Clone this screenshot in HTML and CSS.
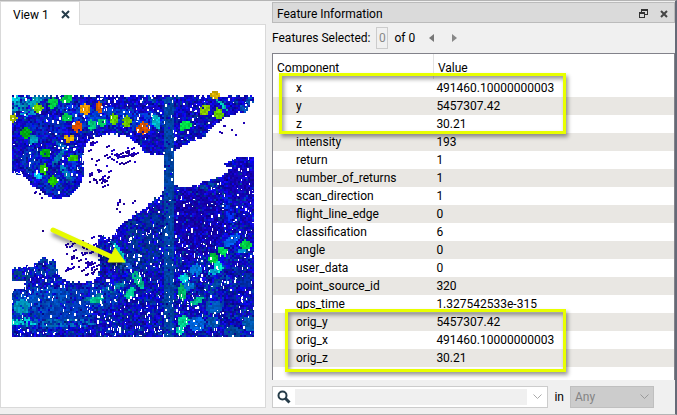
FILE: index.html
```
<!DOCTYPE html>
<html lang="en">

<head>
    <meta charset="UTF-8">
    <meta name="viewport" content="width=device-width, initial-scale=1.0">
    <title>Feature Information</title>
    <link rel="stylesheet" href="styles.css">
</head>

<body>
    <main class="workspace">
        <section class="view">
            <div class="tabs">
                <div class="tab">
                    <span>View 1</span>
                    <button type="button" class="icon-button" aria-label="Close view">
                        <svg width="9" height="9" viewBox="0 0 9 9"><path d="M1 1L8 8M8 1L1 8" stroke="#263c49" stroke-width="2"/></svg>
                    </button>
                </div>
            </div>
            <div class="view-body">
                <canvas id="cloud" class="cloud" width="246" height="252"></canvas>
                <svg class="arrow" width="86" height="48" viewBox="0 0 86 48">
                    <path d="M5 5L64 32" stroke="#e6fa00" stroke-width="5" stroke-linecap="round"/>
                    <path d="M67 23L77 37L60 37Z" fill="#e6fa00" stroke="#e6fa00"/>
                </svg>
            </div>
        </section>

        <section class="panel">
            <header class="panel-title">
                <h1>Feature Information</h1>
                <button type="button" class="icon-button" aria-label="Float panel">
                    <svg width="9" height="9" viewBox="0 0 9 9" fill="none" stroke="#333" shape-rendering="crispEdges"><path d="M2.5 3V.5H8.5V5.5H6M2 1.5H9M.5 3.5H5.5V8.5H.5ZM0 4.5H6"/></svg>
                </button>
                <button type="button" class="icon-button" aria-label="Close panel">
                    <svg width="8" height="8" viewBox="0 0 8 8"><path d="M1 1L7 7M7 1L1 7" stroke="#444" stroke-width="2"/></svg>
                </button>
            </header>

            <div class="selection">
                <label for="current">Features Selected:</label>
                <input type="text" id="current" class="current" value="0" disabled>
                <span class="total">of 0</span>
                <button type="button" class="icon-button" aria-label="Previous feature">
                    <svg width="5" height="8" viewBox="0 0 5 8"><path d="M5 0V8L0 4Z" fill="#777"/></svg>
                </button>
                <button type="button" class="icon-button next" aria-label="Next feature">
                    <svg width="5" height="8" viewBox="0 0 5 8"><path d="M0 0V8L5 4Z" fill="#888"/></svg>
                </button>
            </div>

            <div class="components">
                <table>
                    <thead>
                        <tr><th class="name">Component</th><th>Value</th></tr>
                    </thead>
                    <tbody>
                        <tr><td>x</td><td>491460.10000000003</td></tr>
                        <tr><td>y</td><td>5457307.42</td></tr>
                        <tr><td>z</td><td>30.21</td></tr>
                        <tr><td>intensity</td><td>193</td></tr>
                        <tr><td>return</td><td>1</td></tr>
                        <tr><td>number_of_returns</td><td>1</td></tr>
                        <tr><td>scan_direction</td><td>1</td></tr>
                        <tr><td>flight_line_edge</td><td>0</td></tr>
                        <tr><td>classification</td><td>6</td></tr>
                        <tr><td>angle</td><td>0</td></tr>
                        <tr><td>user_data</td><td>0</td></tr>
                        <tr><td>point_source_id</td><td>320</td></tr>
                        <tr><td>gps_time</td><td>1.327542533e-315</td></tr>
                        <tr><td>orig_y</td><td>5457307.42</td></tr>
                        <tr><td>orig_x</td><td>491460.10000000003</td></tr>
                        <tr><td>orig_z</td><td>30.21</td></tr>
                    </tbody>
                </table>
                <div class="highlight highlight-xyz"></div>
                <div class="highlight highlight-orig"></div>
            </div>

            <form class="search">
                <div class="search-box">
                    <svg width="14" height="14" viewBox="0 0 14 14" fill="none" stroke="#263c49"><circle cx="5.5" cy="5.5" r="4" stroke-width="2"/><path d="M8.5 8.5L12.5 12.5" stroke-width="3"/></svg>
                    <input type="text" aria-label="Search components">
                    <button type="button" class="icon-button" aria-label="Search history">
                        <svg width="9" height="6" viewBox="0 0 9 6"><path d="M.5 .5L4.5 4.5L8.5 .5" fill="none" stroke="#aaa"/></svg>
                    </button>
                </div>
                <label for="scope">in</label>
                <select id="scope" class="scope" disabled>
                    <option>Any</option>
                </select>
            </form>
        </section>
    </main>

    <script src="cloud.js"></script>
</body>

</html>
```
FILE: styles.css
```
* {
    box-sizing: border-box;
}

body {
    margin: 0;
    font-family: Roboto, "Open Sans", sans-serif;
    font-size: 12px;
    line-height: 18px;
    color: #000;
    background: #f0f0f0;
}

input,
select,
button {
    font: inherit;
}

.workspace {
    display: grid;
    grid-template-columns: 33fr 50fr;
    gap: 6px;
    min-height: 100vh;
    padding-bottom: 6px;
    border-top: 1px solid #b4b4b4;
    border-right: 2px solid #656a77;
    border-bottom: 1px solid #b4b4b4;
}

.icon-button {
    display: flex;
    align-items: center;
    justify-content: center;
    padding: 0;
    border: 0;
    background: none;
}

/* map view */
.view {
    display: flex;
    flex-direction: column;
}

.tabs {
    display: flex;
    z-index: 1;
    margin-bottom: -1px;
}

.tab {
    display: flex;
    align-items: center;
    gap: 12px;
    height: 24px;
    padding: 2px 9px 0 12px;
    border: 1px solid #d9d9d9;
    border-bottom: 0;
    background: #fff;
}

.view-body {
    position: relative;
    flex: 1;
    padding: 64px 0 0 9px;
    border: 1px solid #d9d9d9;
    background: #fff;
}

.cloud {
    display: block;
}

.arrow {
    position: absolute;
    top: 200px;
    left: 47px;
    fill: none;
    filter: drop-shadow(1px 4px 2px rgba(0, 0, 0, 0.45));
}

/* feature information panel */
.panel {
    display: flex;
    flex-direction: column;
    padding-top: 1px;
}

.panel-title {
    display: flex;
    align-items: center;
    gap: 12px;
    height: 21px;
    padding: 2px 6px 0 4px;
    border: 1px solid #bbb;
    background: #dadada;
}

.panel-title h1 {
    flex: 1;
    margin: 0;
    font-size: 12px;
    font-weight: 400;
}

.selection {
    display: flex;
    align-items: center;
    height: 30px;
}

.current {
    width: 12px;
    height: 22px;
    margin: 0 6px;
    padding: 0;
    border: 1px solid #ccc;
    background: #f0f0f0;
    color: #888;
    text-align: center;
}

.total {
    margin-right: 14px;
}

.next {
    margin-left: 18px;
}

.components {
    position: relative;
    flex: 1;
    border: 1px solid #82828a;
    border-bottom: 0;
    background: #fff;
}

.components table {
    width: 100%;
    border-collapse: collapse;
    table-layout: fixed;
}

.components th {
    height: 25px;
    padding: 2px 4px 0;
    font-weight: 400;
    text-align: left;
}

.components .name {
    width: 40%;
    border-right: 1px solid #e3e3e3;
}

.components td {
    height: 18px;
    padding: 1px 3px 0;
    line-height: 17px;
}

.components td:first-child {
    padding-left: 23px;
}

.components tbody tr:nth-child(even) {
    background: #e9e7e3;
}

.highlight {
    position: absolute;
    border: 3px solid #e8ff00;
    box-shadow: 2px 3px 4px rgba(0, 0, 0, 0.4), inset 2px 3px 4px rgba(0, 0, 0, 0.4);
}

.highlight-xyz {
    top: 19px;
    left: 6px;
    width: 287px;
    height: 61px;
}

.highlight-orig {
    top: 255px;
    left: 12px;
    width: 281px;
    height: 63px;
}

.search {
    display: flex;
    align-items: center;
    gap: 6px;
    margin-top: 6px;
    padding-right: 21px;
}

.search-box {
    display: flex;
    flex: 1;
    align-items: center;
    gap: 4px;
    height: 22px;
    padding: 0 4px;
    border: 1px solid #ccc;
    background: #fff;
}

.search-box input {
    flex: 1;
    min-width: 0;
    height: 16px;
    padding: 0;
    border: 0;
    background: #f0f0f0;
}

.search-box .icon-button {
    width: 12px;
}

.scope {
    width: 84px;
    height: 22px;
    padding: 0 4px;
    border: 1px solid #bfbfbf;
    border-radius: 0;
    appearance: none;
    background: #ccc url("data:image/svg+xml,%3Csvg xmlns='http://www.w3.org/2000/svg' width='9' height='6'%3E%3Cpath d='M.5 .5L4.5 4.5L8.5 .5' fill='none' stroke='%23999'/%3E%3C/svg%3E") no-repeat right 4px center;
    color: #838383;
    opacity: 1;
}
```
FILE: cloud.js
```
const canvas = document.getElementById('cloud');
const ctx = canvas.getContext('2d');

// canvas origin in map coordinates
const originX = 10;
const originY = 88;

let seed = 12;
function random() {
    seed = (seed + 0x6D2B79F5) | 0;
    let t = Math.imul(seed ^ (seed >>> 15), 1 | seed);
    t = (t + Math.imul(t ^ (t >>> 7), 61 | t)) ^ t;
    return ((t ^ (t >>> 14)) >>> 0) / 4294967296;
}

function shape(points) {
    const path = new Path2D();
    points.forEach(([x, y]) => path.lineTo(x, y));
    path.closePath();
    return path;
}

const north = shape([
    [12, 95], [254, 95], [254, 102], [248, 105], [247, 112], [238, 111], [225, 117], [215, 125],
    [202, 137], [188, 142], [175, 150], [162, 154], [145, 152], [142, 145], [132, 138], [125, 135],
    [110, 133], [93, 137], [85, 145], [83, 152], [84, 172], [78, 188], [67, 196], [55, 198],
    [46, 194], [33, 185], [20, 173], [12, 173]
]);

const south = shape([
    [254, 156], [240, 155], [222, 164], [233, 167], [223, 175], [205, 180], [188, 187], [173, 185],
    [162, 192], [145, 207], [122, 223], [110, 238], [100, 233], [97, 245], [100, 268], [95, 280],
    [84, 282], [67, 281], [58, 273], [55, 260], [43, 256], [32, 265], [12, 267], [12, 280],
    [25, 280], [25, 287], [12, 290], [12, 336], [254, 336]
]);

// x, y, radius x, radius y, angle, colour
const patches = [
    // lower ground
    [45, 306, 48, 22, 0, [0, 60, 190]], [85, 300, 40, 15, -20, [0, 60, 190]],
    [45, 266, 12, 8, 0, [0, 70, 170]], [20, 274, 11, 6, 0, [0, 70, 140]],
    [40, 298, 28, 12, -10, [0, 85, 200]], [20, 305, 8, 7, 0, [0, 150, 190]],
    [145, 240, 16, 30, 20, [0, 50, 160]], [130, 230, 6, 12, 0, [0, 60, 150]],
    [195, 222, 25, 35, 0, [20, 0, 170]], [240, 180, 18, 15, 0, [20, 0, 180]],
    [206, 185, 13, 3, -10, [0, 70, 160]], [228, 208, 4, 13, -12, [0, 50, 240]],
    [218, 282, 15, 6, -25, [0, 75, 170]], [213, 305, 8, 6, 0, [0, 90, 190]],
    [212, 320, 7, 6, 0, [0, 85, 180]], [232, 330, 8, 6, 0, [0, 75, 160]],
    [248, 322, 6, 7, 0, [0, 90, 180]], [245, 278, 7, 7, 0, [0, 45, 170]],
    [196, 322, 8, 7, 0, [0, 100, 220]], [231, 238, 9, 4, -35, [0, 95, 240]],
    [60, 321, 45, 4, 0, [0, 110, 190]], [24, 320, 12, 4, 0, [0, 205, 215]],
    [14, 320, 4, 4, 0, [0, 215, 200]], [106, 289, 25, 3, -25, [0, 130, 170]],
    [95, 298, 7, 3, -20, [0, 200, 150]], [116, 255, 4, 15, -20, [0, 90, 170]],
    [119, 252, 3, 11, -28, [0, 200, 200]], [125, 264, 6, 3, 0, [20, 90, 220]],
    [137, 278, 4, 10, -28, [0, 185, 140]], [129, 292, 4, 7, 30, [0, 205, 150]],
    [183, 276, 5, 4, 0, [0, 225, 230]], [181, 290, 4, 8, 0, [0, 185, 105]],
    [188, 284, 5, 4, 30, [0, 120, 220]], [195, 268, 6, 6, 0, [0, 115, 215]],
    [212, 256, 5, 5, 0, [0, 200, 60]], [222, 249, 5, 5, 0, [0, 225, 90]],
    [217, 265, 5, 5, 0, [0, 235, 200]], [212, 270, 5, 3, -20, [0, 165, 210]],
    [245, 243, 5, 5, 20, [0, 215, 70]], [241, 249, 4, 2, 0, [0, 150, 220]],
    [196, 299, 8, 3, -30, [0, 190, 145]], [183, 319, 6, 5, 0, [0, 215, 145]],
    [179, 328, 4, 4, 0, [0, 200, 170]],
    // upper ground
    [30, 98, 22, 10, -20, [0, 95, 185]], [45, 126, 22, 12, -15, [0, 45, 200]],
    [80, 112, 22, 11, 25, [0, 65, 215]], [125, 116, 40, 9, 5, [0, 65, 220]],
    [32, 158, 12, 13, 0, [0, 55, 190]], [50, 182, 12, 10, 0, [0, 60, 200]],
    [73, 163, 7, 16, 10, [0, 60, 220]], [150, 97, 20, 2, 30, [0, 75, 170]],
    [20, 102, 10, 6, -30, [0, 150, 190]], [34, 100, 7, 4, -30, [0, 165, 185]],
    [28, 112, 10, 4, -20, [0, 145, 200]], [15, 97, 4, 3, 0, [0, 200, 220]],
    [37, 106, 5, 4, 0, [110, 205, 0]], [12, 116, 4, 4, 0, [170, 195, 0]],
    [52, 101, 5, 5, 0, [0, 205, 65]], [66, 97, 6, 4, -20, [0, 215, 75]],
    [25, 131, 5, 5, 0, [0, 175, 20]], [32, 138, 4, 5, 0, [0, 165, 195]],
    [44, 151, 5, 4, 0, [0, 185, 20]], [43, 167, 4, 5, 0, [45, 205, 0]],
    [37, 174, 4, 3, 0, [0, 200, 240]], [52, 179, 5, 5, 0, [30, 205, 0]],
    [72, 156, 5, 4, 0, [50, 205, 0]], [58, 155, 3, 9, 38, [0, 120, 180]],
    [64, 170, 3, 9, -35, [0, 130, 190]], [61, 144, 8, 2, 35, [0, 110, 200]],
    [68, 136, 5, 4, 0, [225, 175, 0]], [77, 125, 5, 5, 20, [235, 85, 0]],
    [84, 107, 5, 5, 0, [245, 155, 0]], [98, 105, 4, 5, 0, [215, 95, 0]],
    [66, 115, 5, 4, 0, [0, 205, 80]], [91, 123, 4, 5, 0, [0, 210, 130]],
    [101, 120, 4, 4, 0, [0, 210, 100]], [113, 117, 4, 6, 0, [105, 215, 0]],
    [126, 120, 4, 6, 0, [110, 200, 0]], [142, 126, 6, 6, 0, [215, 85, 0]],
    [155, 119, 4, 7, -15, [0, 190, 210]], [184, 124, 6, 4, -25, [0, 235, 75]],
    [204, 108, 6, 5, -30, [140, 205, 0]], [218, 112, 4, 6, -30, [105, 215, 0]],
    [220, 101, 2, 11, -40, [0, 200, 185]], [214, 93, 5, 4, 0, [220, 180, 0]],
    [243, 106, 4, 4, 0, [0, 80, 190]], [249, 99, 3, 4, 0, [0, 90, 190]]
];

function dot(x, y, colour) {
    ctx.fillStyle = `rgb(${colour.map(Math.round).join()})`;
    ctx.fillRect(x - originX, y - originY, 2, 2);
}

function patchAt(x, y) {
    for (let i = patches.length - 1; i >= 0; i--) {
        const [px, py, rx, ry, angle, colour] = patches[i];
        const a = angle * Math.PI / 180;
        const u = ((x - px) * Math.cos(a) + (y - py) * Math.sin(a)) / rx;
        const v = ((y - py) * Math.cos(a) - (x - px) * Math.sin(a)) / ry;
        // large patches fade into the ground, small ones stay solid
        const solid = rx < 10 && ry < 12;
        if (u * u + v * v < 0.8 + random() * 0.5 && random() < (solid ? 0.97 : 0.55)) {
            return colour;
        }
    }
    return null;
}

for (let y = 88; y < 336; y += 2) {
    for (let x = 10; x < 254; x += 2) {
        const jx = x + random() * 2;
        const jy = y + random() * 2;
        const inNorth = ctx.isPointInPath(north, jx, jy);
        const inSouth = ctx.isPointInPath(south, jx, jy);
        const onRoad = x >= 164 && x <= 172 && y >= 95;
        let colour = patchAt(x, y);
        const treeTop = y < 95 && colour && colour[0] + colour[1] > 190;
        const treeLeft = x < 12 && colour && colour[0] > 100;
        if (!inNorth && !inSouth && !onRoad && !treeTop && !treeLeft) {
            continue;
        }
        if (onRoad && random() < 0.9) {
            colour = [0, 70, 168];
        }
        if (!colour) {
            const dull = y > 240 ? 0.35 : 0.18;
            colour = random() < dull
                ? [0, 25 + random() * 50, 140 + random() * 50]
                : [random() * 28, random() * 14, 150 + random() * 100];
        }
        const light = 0.82 + random() * 0.3;
        dot(x, y, colour.map((c) => Math.min(255, c * light)));
    }
}

// small gaps between the scan lines
for (let i = 0; i < 800; i++) {
    const x = Math.floor(random() * 246);
    const y = Math.floor(random() * 252);
    ctx.clearRect(x, y, 1 + Math.floor(random() * 2), 1 + Math.floor(random() * 3));
}
for (let i = 0; i < 160; i++) {
    const x = Math.floor(random() * 246);
    const y = 140 + Math.floor(random() * 110);
    ctx.clearRect(x, y, 1, 2 + Math.floor(random() * 2));
}

// loose points over the water: x, y, width, height, count
[
    [88, 140, 28, 20, 16], [88, 162, 22, 24, 18], [116, 146, 20, 18, 26], [93, 174, 18, 8, 10],
    [116, 198, 20, 14, 9], [65, 234, 32, 22, 24], [65, 256, 32, 18, 28], [218, 120, 26, 14, 7],
    [28, 190, 14, 8, 4], [42, 229, 2, 2, 1], [119, 210, 2, 2, 1]
].forEach(([x, y, w, h, count]) => {
    for (let i = 0; i < count; i++) {
        const px = x + Math.floor(random() * w);
        const py = y + Math.floor(random() * h);
        const colour = [30, 0, 130 + random() * 80];
        dot(px, py, colour);
        if (count > 10 && random() < 0.5) {
            dot(px + 2, py - 1, colour);
        }
    }
});
```
